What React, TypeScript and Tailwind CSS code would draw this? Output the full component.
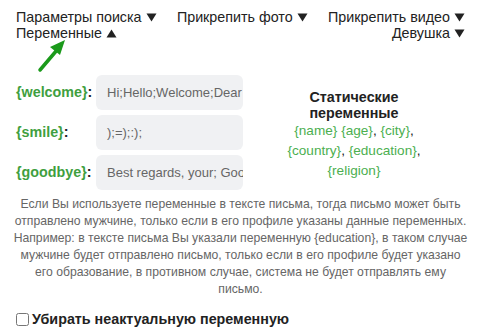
import React from 'react'

const vars = [
    { name: '{welcome}', value: 'Hi;Hello;Welcome;Dear' },
    { name: '{smile}', value: ');=);:);' },
    { name: '{goodbye}', value: 'Best regards, your; Good bye' },
]

function Caret({ up }: { up?: boolean }) {
    return (
        <svg width="11" height="9" viewBox="0 0 11 9" className="inline-block ml-1 align-baseline">
            {up ? <path d="M5.5 0.5 L10.5 8.5 L0.5 8.5 Z" fill="#222" /> : <path d="M0.5 0.5 L10.5 0.5 L5.5 8.5 Z" fill="#222" />}
        </svg>
    )
}

export default function App() {
    return (
        <div className="w-[481px] h-[335px] bg-white text-[#222] font-['Liberation_Sans',Arial,sans-serif] px-4 pt-[9px] relative">
            <div className="flex justify-between text-[14.3px] leading-[16px]">
                <div>
                    <div>Параметры поиска<Caret /></div>
                    <div>Переменные<Caret up /></div>
                </div>
                <div>Прикрепить фото<Caret /></div>
                <div className="text-right">
                    <div>Прикрепить видео<Caret /></div>
                    <div>Девушка<Caret /></div>
                </div>
            </div>

            <svg width="34" height="36" viewBox="0 0 34 36" className="absolute left-[36px] top-[37px]">
                <path d="M4 33 L21 13" stroke="#1b9a1b" strokeWidth="3.5" strokeLinecap="round" />
                <path d="M29 3 L14 10 L24 18 Z" fill="#1b9a1b" />
            </svg>

            <div className="flex mt-[34px]">
                <div className="flex flex-col gap-[5px] w-[227px]">
                    {vars.map((v) => (
                        <div key={v.name} className="flex items-center">
                            <div className="w-[80px] text-[14.3px] font-bold text-[#3f9f3f]">
                                {v.name}<span className="text-[#222]">:</span>
                            </div>
                            <div className="w-[147px] h-[35px] rounded-[6px] bg-[#f0f1f3] px-[11px] flex items-center overflow-hidden whitespace-nowrap text-[13px] text-[#666]">
                                {v.value}
                            </div>
                        </div>
                    ))}
                </div>
                <div className="flex-1 flex flex-col items-center text-center pt-[14px] text-[13.6px] leading-[20px]">
                    <div className="font-bold text-[14.3px] leading-[16px] text-[#222]">Статические<br />переменные</div>
                    <div className="text-[#4caf50] w-[165px]">
                        {'{name}'} {'{age}'}<span className="text-[#222]">,</span> {'{city}'}<span className="text-[#222]">,</span> {'{country}'}<span className="text-[#222]">,</span> {'{education}'}<span className="text-[#222]">,</span> {'{religion}'}
                    </div>
                </div>
            </div>

            <p className="mt-[6px] text-center text-[12.2px] leading-[17px] text-[#666] -mx-1">
                Если Вы используете переменные в тексте письма, тогда письмо может быть отправлено мужчине, только если в его профиле указаны данные переменных. Например: в тексте письма Вы указали переменную {'{education}'}, в таком случае мужчине будет отправлено письмо, только если в его профиле будет указано его образование, в противном случае, система не будет отправлять ему письмо.
            </p>

            <label className="flex items-center gap-[3px] mt-[11px] text-[14.3px] font-bold">
                <input type="checkbox" className="w-[13px] h-[13px]" />
                Убирать неактуальную переменную
            </label>
        </div>
    )
}
